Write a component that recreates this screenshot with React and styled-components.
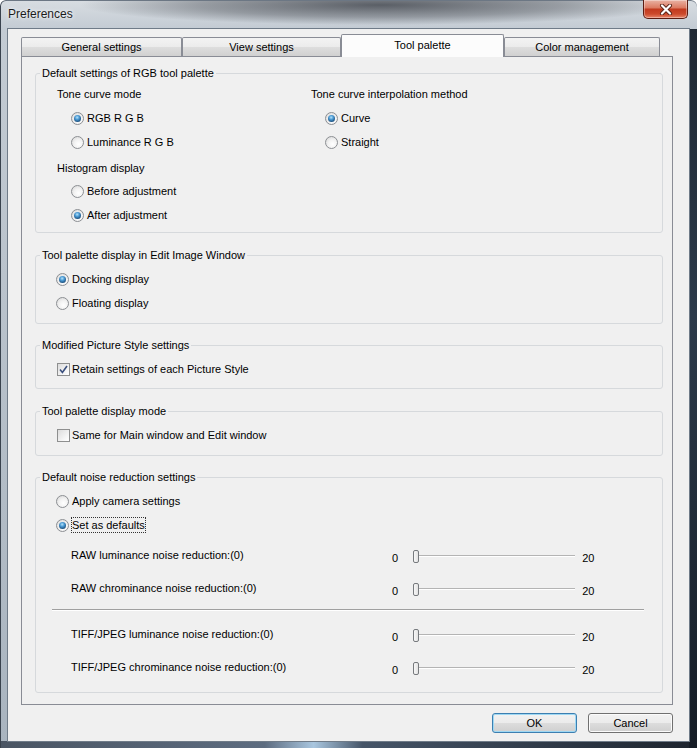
import React from "react";
import styled, { createGlobalStyle } from "styled-components";

const Global = createGlobalStyle`
  html, body { margin: 0; padding: 0; }
  body {
    background: #ffffff;
    font-family: "Liberation Sans", Arial, sans-serif;
    font-size: 11px;
    color: #000;
  }
`;

const Window = styled.div`
  width: 697px;
  height: 748px;
  box-sizing: border-box;
  display: flex;
  flex-direction: column;
  overflow: hidden;
  border-radius: 6px 6px 0 0;
  box-shadow: inset 1px 0 0 #39424d, inset 0 1px 0 #6c7784;
  background:
    linear-gradient(#1f2833, #2c3a4a 40%, #151c25) right bottom / 8px 719px no-repeat,
    linear-gradient(to right, #4a5563, #5d6c80 38%, #a9c6df 45%, #465568 52%, #1d242e) left bottom / 100% 7px no-repeat,
    radial-gradient(ellipse 300px 20px at 380px 5px, rgba(38, 42, 50, 0.7) 0%, rgba(38, 42, 50, 0.35) 60%, rgba(38, 42, 50, 0) 100%) 0 0 / 100% 29px no-repeat,
    linear-gradient(#d8dde2, #c3cbd3 29px, #a9b4bf);
`;

const TitleBar = styled.div`
  flex: none;
  height: 29px;
  display: flex;
  align-items: flex-start;
  justify-content: space-between;
  padding: 0 9px 0 8px;
`;

const Title = styled.span`
  line-height: 28px;
  font-size: 12px;
  color: #1b1b1b;
  text-shadow: 0 0 5px #f4f6f8, 0 0 2px #f4f6f8;
`;

const CloseButton = styled.div`
  width: 45px;
  height: 19px;
  box-sizing: border-box;
  border: 1px solid #5b1c12;
  border-top: none;
  border-radius: 0 0 5px 5px;
  background: linear-gradient(#e9b2a4 0%, #dc7c64 42%, #c23a1f 52%, #cc4a2c 78%, #e8866b 100%);
  box-shadow: inset 0 0 0 1px rgba(255, 255, 255, 0.35);
  display: flex;
  align-items: center;
  justify-content: center;
`;

const Client = styled.div`
  flex: 1;
  margin: 0 8px 7px 8px;
  background: #f0f0f0;
  box-shadow: 0 0 0 1px #6f7b88;
  display: flex;
  flex-direction: column;
  padding: 5px 16px 8px 13px;
`;

const TabStrip = styled.div`
  display: flex;
  align-items: flex-end;
  height: 23px;
`;

const Tab = styled.div`
  position: relative;
  z-index: ${(p) => (p.$active ? 2 : 0)};
  width: ${(p) => p.$w}px;
  height: ${(p) => (p.$active ? 23 : 20)}px;
  box-sizing: border-box;
  border: 1px solid #898c95;
  border-bottom: none;
  border-radius: 2px 2px 0 0;
  padding-top: ${(p) => (p.$active ? 3 : 2)}px;
  line-height: 14px;
  text-align: center;
  background: ${(p) =>
    p.$active
      ? "#fcfcfc"
      : "linear-gradient(#f3f3f3, #ebebeb 50%, #dddddd 50%, #cfcfcf)"};
`;

const Panel = styled.div`
  position: relative;
  z-index: 1;
  margin-top: -1px;
  border: 1px solid #898c95;
  background: #f0f0f0;
  padding: 8px 9px 11px 13px;
  display: flex;
  flex-direction: column;
`;

const Group = styled.fieldset`
  margin: ${(p) => p.$mt || 0}px 0 0 0;
  padding: 0;
  min-width: 0;
  border: 1px solid #d6d9dc;
  border-radius: 3px;
`;

const Legend = styled.legend`
  margin-left: 4px;
  padding: 0 2px;
  height: 16px;
  line-height: 16px;
`;

const GroupBody = styled.div`
  padding: ${(p) => p.$pad};
`;

const Columns = styled.div`
  display: grid;
  grid-template-columns: 254px 1fr;
`;

const Column = styled.div`
  display: flex;
  flex-direction: column;
`;

const Heading = styled.div`
  height: ${(p) => p.$h || 24}px;
  margin-top: ${(p) => p.$mt || 0}px;
  display: flex;
  align-items: center;
`;

const Row = styled.div`
  height: 24px;
  margin-top: ${(p) => p.$mt || 0}px;
  padding-left: ${(p) => p.$indent || 0}px;
  display: flex;
  align-items: center;
`;

const RadioDot = styled.span`
  position: relative;
  flex: none;
  width: 13px;
  height: 13px;
  box-sizing: border-box;
  margin-right: 3px;
  border-radius: 50%;
  border: 1px solid #8c8f93;
  background: radial-gradient(circle at 60% 65%, #ffffff 0%, #f2f2f2 45%, #d3d3d3 100%);
  &::after {
    content: "";
    display: ${(p) => (p.$on ? "block" : "none")};
    position: absolute;
    inset: 2px;
    border-radius: 50%;
    background: radial-gradient(circle at 45% 35%, #b4e3fa 0%, #4b9ad4 35%, #1f5584 72%, #163a5e 100%);
  }
`;

const CheckBox = styled.span`
  flex: none;
  width: 13px;
  height: 13px;
  box-sizing: border-box;
  margin-right: 2px;
  border: 1px solid #8e8f8f;
  background: linear-gradient(135deg, #dcdcdc, #f6f6f6 70%, #ffffff);
  display: flex;
  align-items: center;
  justify-content: center;
`;

const FocusText = styled.span`
  margin-left: -1px;
  border: 1px dotted #333;
  line-height: 14px;
`;

const SliderLabel = styled.span`
  width: 321px;
  flex: none;
`;

const SliderArea = styled.div`
  display: flex;
  align-items: center;
  margin-top: 6px;
`;

const Track = styled.div`
  width: 162px;
  height: 13px;
  margin: -3px 7px 0 15px;
  display: flex;
  background: linear-gradient(
    to bottom,
    transparent 5px,
    #b4b4b4 5px,
    #b4b4b4 6px,
    #ffffff 6px,
    #ffffff 7px,
    transparent 7px
  );
`;

const Thumb = styled.span`
  width: 6px;
  height: 13px;
  box-sizing: border-box;
  border: 1px solid #777a7e;
  border-radius: 2px;
  background: linear-gradient(to right, #f7f7f7, #e3e3e3);
`;

const Separator = styled.div`
  height: 1px;
  margin: 9px 18px 0 -4px;
  background: #a0a0a0;
  border-bottom: 1px solid #ffffff;
`;

const ButtonRow = styled.div`
  display: flex;
  justify-content: flex-end;
  gap: 11px;
  margin-top: 8px;
`;

const Button = styled.div`
  width: 85px;
  height: 20px;
  box-sizing: border-box;
  border: 1px solid ${(p) => (p.$default ? "#3c7fb1" : "#707070")};
  border-radius: 3px;
  background: linear-gradient(#f2f2f2, #ebebeb 50%, #dddddd 50%, #cfcfcf);
  box-shadow: inset 0 0 0 1px ${(p) => (p.$default ? "#9fd8f3" : "#fbfbfb")};
  display: flex;
  align-items: center;
  justify-content: center;
`;

const Radio = ({ on, indent, mt, children }) => (
  <Row $indent={indent} $mt={mt}>
    <RadioDot $on={on} />
    {children}
  </Row>
);

const Check = ({ on, children }) => (
  <Row>
    <CheckBox>
      {on && (
        <svg width="9" height="9" viewBox="0 0 9 9">
          <path d="M1 4.6 L3.4 7.4 L8 1" fill="none" stroke="#3a4f7d" strokeWidth="1.6" />
        </svg>
      )}
    </CheckBox>
    {children}
  </Row>
);

const Slider = ({ label, mt }) => (
  <Row $indent={15} $mt={mt}>
    <SliderLabel>{label}</SliderLabel>
    <SliderArea>
      <span>0</span>
      <Track>
        <Thumb />
      </Track>
      <span>20</span>
    </SliderArea>
  </Row>
);

const tabs = [
  { name: "General settings", w: 161 },
  { name: "View settings", w: 159 },
  { name: "Tool palette", w: 163, active: true },
  { name: "Color management", w: 156 },
];

export default function App() {
  return (
    <>
      <Global />
      <Window>
        <TitleBar>
          <Title>Preferences</Title>
          <CloseButton>
            <svg width="14" height="11" viewBox="0 0 14 11">
              <path d="M3 1.5 L11 9.5 M11 1.5 L3 9.5" stroke="#5a2418" strokeWidth="4" strokeLinecap="round" />
              <path d="M3 1.5 L11 9.5 M11 1.5 L3 9.5" stroke="#ffffff" strokeWidth="2.2" strokeLinecap="round" />
            </svg>
          </CloseButton>
        </TitleBar>
        <Client>
          <TabStrip>
            {tabs.map((t) => (
              <Tab key={t.name} $w={t.w} $active={t.active}>
                {t.name}
              </Tab>
            ))}
          </TabStrip>
          <Panel>
            <Group>
              <Legend>Default settings of RGB tool palette</Legend>
              <GroupBody $pad="1px 0 5px 21px">
                <Columns>
                  <Column>
                    <Heading>Tone curve mode</Heading>
                    <Radio on indent={14}>RGB R G B</Radio>
                    <Radio indent={14}>Luminance R G B</Radio>
                    <Heading $h={22} $mt={3}>Histogram display</Heading>
                    <Radio indent={14}>Before adjustment</Radio>
                    <Radio on indent={14}>After adjustment</Radio>
                  </Column>
                  <Column>
                    <Heading>Tone curve interpolation method</Heading>
                    <Radio on indent={14}>Curve</Radio>
                    <Radio indent={14}>Straight</Radio>
                  </Column>
                </Columns>
              </GroupBody>
            </Group>

            <Group $mt={14}>
              <Legend>Tool palette display in Edit Image Window</Legend>
              <GroupBody $pad="4px 0 8px 20px">
                <Radio on>Docking display</Radio>
                <Radio>Floating display</Radio>
              </GroupBody>
            </Group>

            <Group $mt={13}>
              <Legend>Modified Picture Style settings</Legend>
              <GroupBody $pad="4px 0 7px 21px">
                <Check on>Retain settings of each Picture Style</Check>
              </GroupBody>
            </Group>

            <Group $mt={14}>
              <Legend>Tool palette display mode</Legend>
              <GroupBody $pad="4px 0 8px 21px">
                <Check>Same for Main window and Edit window</Check>
              </GroupBody>
            </Group>

            <Group $mt={13}>
              <Legend>Default noise reduction settings</Legend>
              <GroupBody $pad="4px 0 13px 20px">
                <Radio>Apply camera settings</Radio>
                <Radio on>
                  <FocusText>Set as defaults</FocusText>
                </Radio>
                <Slider mt={6} label="RAW luminance noise reduction:(0)" />
                <Slider mt={9} label="RAW chrominance noise reduction:(0)" />
                <Separator />
                <Slider mt={11} label="TIFF/JPEG luminance noise reduction:(0)" />
                <Slider mt={9} label="TIFF/JPEG chrominance noise reduction:(0)" />
              </GroupBody>
            </Group>
          </Panel>
          <ButtonRow>
            <Button $default>OK</Button>
            <Button>Cancel</Button>
          </ButtonRow>
        </Client>
      </Window>
    </>
  );
}
